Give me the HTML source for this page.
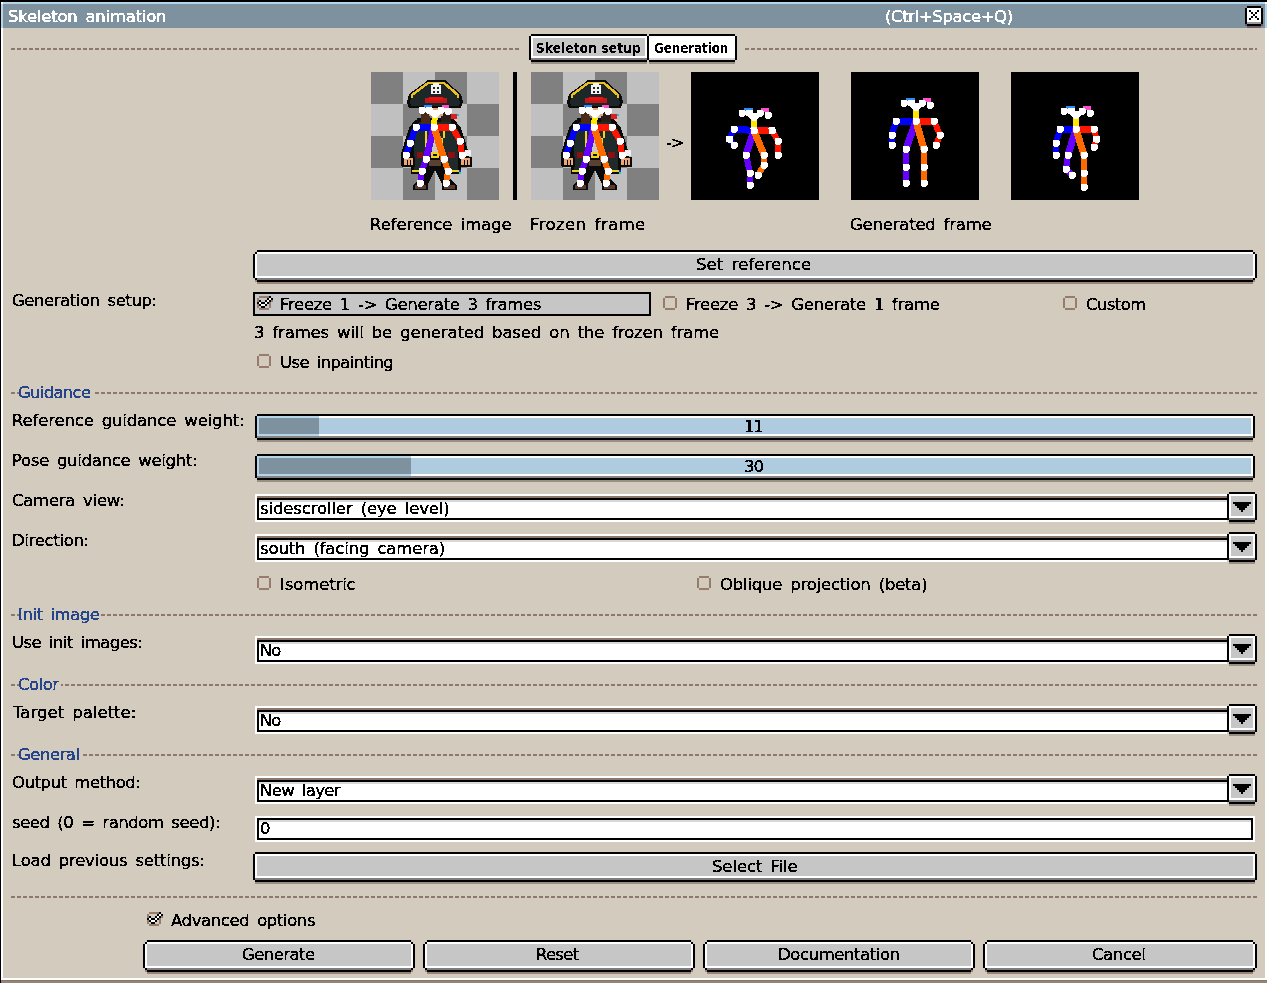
<!DOCTYPE html>
<html lang="en"><head><meta charset="utf-8"><title>Skeleton animation</title>
<style>
html,body{margin:0;padding:0}
body{width:1267px;height:983px;overflow:hidden;background:#d3cbbe;position:relative;font-family:"DejaVu Sans","Liberation Sans",sans-serif}
i{position:absolute;display:block}
i.d{height:2px;background:repeating-linear-gradient(90deg,#8d786b 0,#8d786b 4px,transparent 4px,transparent 6px)}
.t,.m{will-change:transform;filter:url(#px)}
.t{position:absolute;white-space:pre;font-size:16.5px;line-height:20px;color:#000;word-spacing:3px;-webkit-text-stroke:0.3px currentColor}
.t.w{color:#fff}
.t.b{color:#27468c}
.m{position:absolute;white-space:pre;font-family:"DejaVu Sans Condensed","DejaVu Sans","Liberation Sans",sans-serif;font-size:13.5px;line-height:20px;font-weight:bold;color:#000}
svg{position:absolute;display:block}
</style></head>
<body>
<svg width="0" height="0" style="left:0;top:0"><defs><filter id="px" x="0" y="0" width="1" height="1" color-interpolation-filters="sRGB"><feComponentTransfer><feFuncA type="discrete" tableValues="0 1"/></feComponentTransfer></filter></defs></svg>
<i style="left:0px;top:0px;width:1267px;height:2px;background:#000"></i>
<i style="left:0px;top:0px;width:1px;height:983px;background:#000"></i>
<i style="left:1px;top:2px;width:1266px;height:2px;background:#b5d5ea"></i>
<i style="left:1px;top:2px;width:2px;height:2px;background:#fff"></i>
<i style="left:1265px;top:2px;width:2px;height:2px;background:#fff"></i>
<i style="left:1px;top:4px;width:2px;height:24px;background:#b5d5ea"></i>
<i style="left:1265px;top:4px;width:2px;height:24px;background:#b5d5ea"></i>
<i style="left:3px;top:4px;width:1262px;height:24px;background:#7d929e"></i>
<i style="left:1px;top:28px;width:2px;height:952px;background:#fff"></i>
<i style="left:1265px;top:28px;width:2px;height:952px;background:#fff"></i>
<i style="left:1px;top:978px;width:1266px;height:2px;background:#fff"></i>
<i style="left:1px;top:980px;width:1266px;height:1px;background:#8c7668"></i>
<i style="left:1px;top:981px;width:1266px;height:2px;background:#958373"></i>
<i style="left:1247px;top:6px;width:14px;height:2px;background:#000"></i>
<i style="left:1245px;top:8px;width:2px;height:16px;background:#000"></i>
<i style="left:1261px;top:8px;width:2px;height:16px;background:#000"></i>
<i style="left:1247px;top:24px;width:14px;height:2px;background:#000"></i>
<i style="left:1247px;top:8px;width:14px;height:14px;background:#fff"></i>
<i style="left:1247px;top:22px;width:14px;height:2px;background:#9a9a9a"></i>
<i style="left:1247px;top:26px;width:14px;height:2px;background:#6d5b6c"></i>
<i style="left:1245px;top:24px;width:2px;height:2px;background:#6d5b6c"></i>
<i style="left:1261px;top:24px;width:2px;height:2px;background:#6d5b6c"></i>
<i style="left:1249px;top:10px;width:2px;height:2px;background:#000"></i>
<i style="left:1257px;top:10px;width:2px;height:2px;background:#000"></i>
<i style="left:1251px;top:12px;width:2px;height:2px;background:#000"></i>
<i style="left:1255px;top:12px;width:2px;height:2px;background:#000"></i>
<i style="left:1253px;top:14px;width:2px;height:2px;background:#000"></i>
<i style="left:1251px;top:16px;width:2px;height:2px;background:#000"></i>
<i style="left:1255px;top:16px;width:2px;height:2px;background:#000"></i>
<i style="left:1249px;top:18px;width:2px;height:2px;background:#000"></i>
<i style="left:1257px;top:18px;width:2px;height:2px;background:#000"></i>
<i class="d" style="left:11px;top:48px;width:508px"></i>
<i class="d" style="left:745px;top:48px;width:512px"></i>
<i style="left:531px;top:36px;width:116px;height:24px;background:#fff"></i>
<i style="left:531px;top:34px;width:116px;height:2px;background:#000"></i>
<i style="left:531px;top:60px;width:116px;height:2px;background:#000"></i>
<i style="left:529px;top:36px;width:2px;height:24px;background:#000"></i>
<i style="left:647px;top:36px;width:2px;height:24px;background:#000"></i>
<i style="left:533px;top:38px;width:112px;height:18px;background:#c6c6c6"></i>
<i style="left:531px;top:58px;width:116px;height:2px;background:#7f7f7f"></i>
<i style="left:531px;top:62px;width:116px;height:2px;background:#9a8f84"></i>
<i style="left:649px;top:36px;width:86px;height:24px;background:#fff"></i>
<i style="left:649px;top:34px;width:86px;height:2px;background:#000"></i>
<i style="left:649px;top:60px;width:86px;height:2px;background:#000"></i>
<i style="left:647px;top:36px;width:2px;height:24px;background:#000"></i>
<i style="left:735px;top:36px;width:2px;height:24px;background:#000"></i>
<i style="left:651px;top:38px;width:82px;height:18px;background:#fff"></i>
<i style="left:649px;top:58px;width:86px;height:2px;background:#d4d4d4"></i>
<i style="left:649px;top:62px;width:86px;height:2px;background:#9a8f84"></i>
<svg style="left:371px;top:72px" width="128" height="128" viewBox="0 0 128 128" shape-rendering="crispEdges"><rect width="128" height="128" fill="#c0c0c0"/><rect x="0" y="0" width="32" height="32" fill="#808080"/><rect x="64" y="0" width="32" height="32" fill="#808080"/><rect x="32" y="32" width="32" height="32" fill="#808080"/><rect x="96" y="32" width="32" height="32" fill="#808080"/><rect x="0" y="64" width="32" height="32" fill="#808080"/><rect x="64" y="64" width="32" height="32" fill="#808080"/><rect x="32" y="96" width="32" height="32" fill="#808080"/><rect x="96" y="96" width="32" height="32" fill="#808080"/><polygon points="56,88 72,88 80,108 86,113 86,118 71,118 71,112 64,98 57,112 57,118 42,118 42,113 48,108" fill="#0a0a0a"/><rect x="44" y="113" width="11" height="4" fill="#5a3a28"/><rect x="73" y="113" width="11" height="4" fill="#5a3a28"/><rect x="58" y="88" width="12" height="6" fill="#5a4030"/><polygon points="45,47 38,56 33,72 30,82 30,94 43,95 44,84 46,70 48,58" fill="#0a0a0a"/><polygon points="83,47 90,56 95,72 98,82 99,94 86,95 84,84 82,70 80,58" fill="#0a0a0a"/><polygon points="44,52 40,60 36,72 34,80 42,80 44,70 46,60" fill="#1f2b2b"/><polygon points="84,52 88,60 92,72 94,80 86,80 84,70 82,60" fill="#1f2b2b"/><polygon points="46,46 82,46 87,60 89,80 90,102 76,102 70,88 58,88 52,102 40,102 40,80 42,60" fill="#0a0a0a"/><polygon points="48,50 80,50 85,62 87,80 87,98 77,98 71,85 57,85 51,98 43,98 43,80 44,62" fill="#1f2b2b"/><rect x="50" y="40" width="9" height="12" fill="#4a2a1a"/><rect x="70" y="40" width="10" height="10" fill="#2a1c18"/><rect x="58" y="32" width="14" height="12" fill="#e8a87c"/><rect x="61" y="62" width="6" height="18" fill="#c8c8c0"/><rect x="54" y="58" width="2" height="22" fill="#f0d020"/><rect x="72" y="58" width="2" height="8" fill="#f0d020"/><rect x="70" y="66" width="2" height="12" fill="#f0d020"/><rect x="46" y="80" width="6" height="6" fill="#8a1018"/><rect x="77" y="80" width="7" height="6" fill="#8a1018"/><rect x="56" y="80" width="16" height="6" fill="#101010"/><rect x="60" y="80" width="8" height="6" fill="#f0d020"/><rect x="62" y="82" width="4" height="2" fill="#101010"/><rect x="41" y="98" width="8" height="2" fill="#f0d020"/><rect x="79" y="98" width="10" height="2" fill="#f0d020"/><rect x="88" y="98" width="2" height="2" fill="#2030e0"/><rect x="88" y="100" width="2" height="2" fill="#20d0c0"/><rect x="31" y="85" width="13" height="10" fill="#0a0a0a"/><rect x="33" y="86" width="9" height="7" fill="#e8a87c"/><rect x="36" y="88" width="1" height="5" fill="#0a0a0a"/><rect x="39" y="88" width="1" height="5" fill="#0a0a0a"/><rect x="88" y="85" width="13" height="10" fill="#0a0a0a"/><rect x="90" y="86" width="9" height="7" fill="#e8a87c"/><rect x="93" y="88" width="1" height="5" fill="#0a0a0a"/><rect x="96" y="88" width="1" height="5" fill="#0a0a0a"/><rect x="94" y="78" width="6" height="6" fill="#f0f0f0"/><rect x="80" y="42" width="6" height="5" fill="#e02020"/><rect x="86" y="42" width="2" height="2" fill="#20c0e0"/><rect x="84" y="47" width="3" height="2" fill="#f0c0c0"/><polygon points="56,8 74,8 78,12 90,22 92,30 90,36 38,36 36,30 38,22 52,12" fill="#0a0a0a"/><polygon points="57,12 73,12 87,24 89,30 88,34 40,34 39,30 41,24" fill="#1e2727"/><polyline points="41,26 41,23 57,11 73,11 87,23 87,26" fill="none" stroke="#e8c020" stroke-width="2.5"/><rect x="54" y="26" width="22" height="5" fill="#c01818"/><rect x="58" y="25" width="14" height="3" fill="#f01010"/><rect x="60" y="13" width="10" height="9" fill="#f4f4f4"/><rect x="62" y="15" width="2" height="2" fill="#222"/><rect x="66" y="15" width="2" height="2" fill="#222"/><rect x="62" y="19" width="2" height="2" fill="#222"/><rect x="66" y="19" width="2" height="2" fill="#222"/><rect x="62" y="11" width="6" height="2" fill="#f4f4f4"/><line x1="64" y1="42" x2="63" y2="55" stroke="#ffe600" stroke-width="6" stroke-linecap="butt"/><line x1="63" y1="55" x2="45" y2="55" stroke="#0000ff" stroke-width="7" stroke-linecap="butt"/><line x1="45" y1="55" x2="39" y2="71" stroke="#0000ff" stroke-width="6" stroke-linecap="butt"/><line x1="39" y1="71" x2="35" y2="83" stroke="#0000ff" stroke-width="6" stroke-linecap="butt"/><line x1="63" y1="55" x2="81" y2="55" stroke="#ff1500" stroke-width="7" stroke-linecap="butt"/><line x1="81" y1="55" x2="89" y2="69" stroke="#ff1500" stroke-width="6" stroke-linecap="butt"/><line x1="89" y1="69" x2="91" y2="83" stroke="#ff1500" stroke-width="6" stroke-linecap="butt"/><line x1="63" y1="55" x2="55" y2="87" stroke="#6600ff" stroke-width="7" stroke-linecap="butt"/><line x1="55" y1="87" x2="51" y2="99" stroke="#6600ff" stroke-width="6" stroke-linecap="butt"/><line x1="51" y1="99" x2="49" y2="111" stroke="#6600ff" stroke-width="6" stroke-linecap="butt"/><line x1="63" y1="55" x2="73" y2="87" stroke="#ff6a00" stroke-width="7" stroke-linecap="butt"/><line x1="73" y1="87" x2="77" y2="99" stroke="#ff6a00" stroke-width="6" stroke-linecap="butt"/><line x1="77" y1="99" x2="75" y2="111" stroke="#ff6a00" stroke-width="6" stroke-linecap="butt"/><rect x="53" y="33" width="8" height="3" fill="#2a8cff"/><rect x="71" y="33" width="7" height="4" fill="#ff4fd0"/><rect x="47.5" y="34.5" width="7" height="7" rx="1.5" fill="#fff"/><rect x="54.5" y="34.5" width="7" height="7" rx="1.5" fill="#fff"/><rect x="66.5" y="34.5" width="7" height="7" rx="1.5" fill="#fff"/><rect x="73.5" y="35.5" width="7" height="7" rx="1.5" fill="#fff"/><polygon points="55,38 73,38 67,45 61,45" fill="#fff"/><rect x="60.5" y="38.5" width="7" height="7" rx="1.5" fill="#fff"/><rect x="59.5" y="51.5" width="7" height="7" rx="1.5" fill="#fff"/><rect x="41.5" y="51.5" width="7" height="7" rx="1.5" fill="#fff"/><rect x="35.5" y="67.5" width="7" height="7" rx="1.5" fill="#fff"/><rect x="31.5" y="79.5" width="7" height="7" rx="1.5" fill="#fff"/><rect x="77.5" y="51.5" width="7" height="7" rx="1.5" fill="#fff"/><rect x="85.5" y="65.5" width="7" height="7" rx="1.5" fill="#fff"/><rect x="87.5" y="79.5" width="7" height="7" rx="1.5" fill="#fff"/><rect x="51.5" y="83.5" width="7" height="7" rx="1.5" fill="#fff"/><rect x="47.5" y="95.5" width="7" height="7" rx="1.5" fill="#fff"/><rect x="45.5" y="107.5" width="7" height="7" rx="1.5" fill="#fff"/><rect x="69.5" y="83.5" width="7" height="7" rx="1.5" fill="#fff"/><rect x="73.5" y="95.5" width="7" height="7" rx="1.5" fill="#fff"/><rect x="71.5" y="107.5" width="7" height="7" rx="1.5" fill="#fff"/></svg><svg style="left:531px;top:72px" width="128" height="128" viewBox="0 0 128 128" shape-rendering="crispEdges"><rect width="128" height="128" fill="#c0c0c0"/><rect x="0" y="0" width="32" height="32" fill="#808080"/><rect x="64" y="0" width="32" height="32" fill="#808080"/><rect x="32" y="32" width="32" height="32" fill="#808080"/><rect x="96" y="32" width="32" height="32" fill="#808080"/><rect x="0" y="64" width="32" height="32" fill="#808080"/><rect x="64" y="64" width="32" height="32" fill="#808080"/><rect x="32" y="96" width="32" height="32" fill="#808080"/><rect x="96" y="96" width="32" height="32" fill="#808080"/><polygon points="56,88 72,88 80,108 86,113 86,118 71,118 71,112 64,98 57,112 57,118 42,118 42,113 48,108" fill="#0a0a0a"/><rect x="44" y="113" width="11" height="4" fill="#5a3a28"/><rect x="73" y="113" width="11" height="4" fill="#5a3a28"/><rect x="58" y="88" width="12" height="6" fill="#5a4030"/><polygon points="45,47 38,56 33,72 30,82 30,94 43,95 44,84 46,70 48,58" fill="#0a0a0a"/><polygon points="83,47 90,56 95,72 98,82 99,94 86,95 84,84 82,70 80,58" fill="#0a0a0a"/><polygon points="44,52 40,60 36,72 34,80 42,80 44,70 46,60" fill="#1f2b2b"/><polygon points="84,52 88,60 92,72 94,80 86,80 84,70 82,60" fill="#1f2b2b"/><polygon points="46,46 82,46 87,60 89,80 90,102 76,102 70,88 58,88 52,102 40,102 40,80 42,60" fill="#0a0a0a"/><polygon points="48,50 80,50 85,62 87,80 87,98 77,98 71,85 57,85 51,98 43,98 43,80 44,62" fill="#1f2b2b"/><rect x="50" y="40" width="9" height="12" fill="#4a2a1a"/><rect x="70" y="40" width="10" height="10" fill="#2a1c18"/><rect x="58" y="32" width="14" height="12" fill="#e8a87c"/><rect x="61" y="62" width="6" height="18" fill="#c8c8c0"/><rect x="54" y="58" width="2" height="22" fill="#f0d020"/><rect x="72" y="58" width="2" height="8" fill="#f0d020"/><rect x="70" y="66" width="2" height="12" fill="#f0d020"/><rect x="46" y="80" width="6" height="6" fill="#8a1018"/><rect x="77" y="80" width="7" height="6" fill="#8a1018"/><rect x="56" y="80" width="16" height="6" fill="#101010"/><rect x="60" y="80" width="8" height="6" fill="#f0d020"/><rect x="62" y="82" width="4" height="2" fill="#101010"/><rect x="41" y="98" width="8" height="2" fill="#f0d020"/><rect x="79" y="98" width="10" height="2" fill="#f0d020"/><rect x="88" y="98" width="2" height="2" fill="#2030e0"/><rect x="88" y="100" width="2" height="2" fill="#20d0c0"/><rect x="31" y="85" width="13" height="10" fill="#0a0a0a"/><rect x="33" y="86" width="9" height="7" fill="#e8a87c"/><rect x="36" y="88" width="1" height="5" fill="#0a0a0a"/><rect x="39" y="88" width="1" height="5" fill="#0a0a0a"/><rect x="88" y="85" width="13" height="10" fill="#0a0a0a"/><rect x="90" y="86" width="9" height="7" fill="#e8a87c"/><rect x="93" y="88" width="1" height="5" fill="#0a0a0a"/><rect x="96" y="88" width="1" height="5" fill="#0a0a0a"/><rect x="94" y="78" width="6" height="6" fill="#f0f0f0"/><rect x="80" y="42" width="6" height="5" fill="#e02020"/><rect x="86" y="42" width="2" height="2" fill="#20c0e0"/><rect x="84" y="47" width="3" height="2" fill="#f0c0c0"/><polygon points="56,8 74,8 78,12 90,22 92,30 90,36 38,36 36,30 38,22 52,12" fill="#0a0a0a"/><polygon points="57,12 73,12 87,24 89,30 88,34 40,34 39,30 41,24" fill="#1e2727"/><polyline points="41,26 41,23 57,11 73,11 87,23 87,26" fill="none" stroke="#e8c020" stroke-width="2.5"/><rect x="54" y="26" width="22" height="5" fill="#c01818"/><rect x="58" y="25" width="14" height="3" fill="#f01010"/><rect x="60" y="13" width="10" height="9" fill="#f4f4f4"/><rect x="62" y="15" width="2" height="2" fill="#222"/><rect x="66" y="15" width="2" height="2" fill="#222"/><rect x="62" y="19" width="2" height="2" fill="#222"/><rect x="66" y="19" width="2" height="2" fill="#222"/><rect x="62" y="11" width="6" height="2" fill="#f4f4f4"/><line x1="64" y1="42" x2="63" y2="55" stroke="#ffe600" stroke-width="6" stroke-linecap="butt"/><line x1="63" y1="55" x2="45" y2="55" stroke="#0000ff" stroke-width="7" stroke-linecap="butt"/><line x1="45" y1="55" x2="39" y2="71" stroke="#0000ff" stroke-width="6" stroke-linecap="butt"/><line x1="39" y1="71" x2="35" y2="83" stroke="#0000ff" stroke-width="6" stroke-linecap="butt"/><line x1="63" y1="55" x2="81" y2="55" stroke="#ff1500" stroke-width="7" stroke-linecap="butt"/><line x1="81" y1="55" x2="89" y2="69" stroke="#ff1500" stroke-width="6" stroke-linecap="butt"/><line x1="89" y1="69" x2="91" y2="83" stroke="#ff1500" stroke-width="6" stroke-linecap="butt"/><line x1="63" y1="55" x2="55" y2="87" stroke="#6600ff" stroke-width="7" stroke-linecap="butt"/><line x1="55" y1="87" x2="51" y2="99" stroke="#6600ff" stroke-width="6" stroke-linecap="butt"/><line x1="51" y1="99" x2="49" y2="111" stroke="#6600ff" stroke-width="6" stroke-linecap="butt"/><line x1="63" y1="55" x2="73" y2="87" stroke="#ff6a00" stroke-width="7" stroke-linecap="butt"/><line x1="73" y1="87" x2="77" y2="99" stroke="#ff6a00" stroke-width="6" stroke-linecap="butt"/><line x1="77" y1="99" x2="75" y2="111" stroke="#ff6a00" stroke-width="6" stroke-linecap="butt"/><rect x="53" y="33" width="8" height="3" fill="#2a8cff"/><rect x="71" y="33" width="7" height="4" fill="#ff4fd0"/><rect x="47.5" y="34.5" width="7" height="7" rx="1.5" fill="#fff"/><rect x="54.5" y="34.5" width="7" height="7" rx="1.5" fill="#fff"/><rect x="66.5" y="34.5" width="7" height="7" rx="1.5" fill="#fff"/><rect x="73.5" y="35.5" width="7" height="7" rx="1.5" fill="#fff"/><polygon points="55,38 73,38 67,45 61,45" fill="#fff"/><rect x="60.5" y="38.5" width="7" height="7" rx="1.5" fill="#fff"/><rect x="59.5" y="51.5" width="7" height="7" rx="1.5" fill="#fff"/><rect x="41.5" y="51.5" width="7" height="7" rx="1.5" fill="#fff"/><rect x="35.5" y="67.5" width="7" height="7" rx="1.5" fill="#fff"/><rect x="31.5" y="79.5" width="7" height="7" rx="1.5" fill="#fff"/><rect x="77.5" y="51.5" width="7" height="7" rx="1.5" fill="#fff"/><rect x="85.5" y="65.5" width="7" height="7" rx="1.5" fill="#fff"/><rect x="87.5" y="79.5" width="7" height="7" rx="1.5" fill="#fff"/><rect x="51.5" y="83.5" width="7" height="7" rx="1.5" fill="#fff"/><rect x="47.5" y="95.5" width="7" height="7" rx="1.5" fill="#fff"/><rect x="45.5" y="107.5" width="7" height="7" rx="1.5" fill="#fff"/><rect x="69.5" y="83.5" width="7" height="7" rx="1.5" fill="#fff"/><rect x="73.5" y="95.5" width="7" height="7" rx="1.5" fill="#fff"/><rect x="71.5" y="107.5" width="7" height="7" rx="1.5" fill="#fff"/></svg><svg style="left:691px;top:72px" width="128" height="128" viewBox="0 0 128 128" shape-rendering="crispEdges"><rect width="128" height="128" fill="#000"/><line x1="63" y1="45" x2="63" y2="58.5" stroke="#ffe600" stroke-width="6" stroke-linecap="butt"/><line x1="63" y1="58.5" x2="43" y2="57" stroke="#0000ff" stroke-width="7" stroke-linecap="butt"/><line x1="43" y1="57" x2="38.5" y2="67" stroke="#0000ff" stroke-width="6" stroke-linecap="butt"/><line x1="38.5" y1="67" x2="43" y2="73" stroke="#0000ff" stroke-width="6" stroke-linecap="butt"/><line x1="63" y1="58.5" x2="81" y2="58.5" stroke="#ff1500" stroke-width="7" stroke-linecap="butt"/><line x1="81" y1="58.5" x2="87" y2="69" stroke="#ff1500" stroke-width="6" stroke-linecap="butt"/><line x1="87" y1="69" x2="87" y2="83" stroke="#ff1500" stroke-width="6" stroke-linecap="butt"/><line x1="63" y1="58.5" x2="55" y2="83" stroke="#6600ff" stroke-width="7" stroke-linecap="butt"/><line x1="55" y1="83" x2="59" y2="101" stroke="#6600ff" stroke-width="6" stroke-linecap="butt"/><line x1="59" y1="101" x2="59" y2="113" stroke="#6600ff" stroke-width="6" stroke-linecap="butt"/><line x1="63" y1="58.5" x2="73" y2="83" stroke="#ff6a00" stroke-width="7" stroke-linecap="butt"/><line x1="73" y1="83" x2="73" y2="93" stroke="#ff6a00" stroke-width="6" stroke-linecap="butt"/><line x1="73" y1="93" x2="67" y2="103" stroke="#ff6a00" stroke-width="6" stroke-linecap="butt"/><rect x="53" y="36" width="8.5" height="3" fill="#2a8cff"/><rect x="70" y="36" width="8" height="4" fill="#ff4fd0"/><rect x="47.5" y="37.5" width="7" height="7" rx="1.5" fill="#fff"/><rect x="55.0" y="37.5" width="7" height="7" rx="1.5" fill="#fff"/><rect x="65.5" y="37.5" width="7" height="7" rx="1.5" fill="#fff"/><rect x="73.5" y="39.5" width="7" height="7" rx="1.5" fill="#fff"/><polygon points="55.5,41 72,41 66,48 60,48" fill="#fff"/><rect x="59.5" y="41.5" width="7" height="7" rx="1.5" fill="#fff"/><rect x="59.5" y="55.0" width="7" height="7" rx="1.5" fill="#fff"/><rect x="39.5" y="53.5" width="7" height="7" rx="1.5" fill="#fff"/><rect x="35.0" y="63.5" width="7" height="7" rx="1.5" fill="#fff"/><rect x="39.5" y="69.5" width="7" height="7" rx="1.5" fill="#fff"/><rect x="77.5" y="55.0" width="7" height="7" rx="1.5" fill="#fff"/><rect x="83.5" y="65.5" width="7" height="7" rx="1.5" fill="#fff"/><rect x="83.5" y="79.5" width="7" height="7" rx="1.5" fill="#fff"/><rect x="51.5" y="79.5" width="7" height="7" rx="1.5" fill="#fff"/><rect x="55.5" y="97.5" width="7" height="7" rx="1.5" fill="#fff"/><rect x="55.5" y="109.5" width="7" height="7" rx="1.5" fill="#fff"/><rect x="69.5" y="79.5" width="7" height="7" rx="1.5" fill="#fff"/><rect x="69.5" y="89.5" width="7" height="7" rx="1.5" fill="#fff"/><rect x="63.5" y="99.5" width="7" height="7" rx="1.5" fill="#fff"/></svg><svg style="left:851px;top:72px" width="128" height="128" viewBox="0 0 128 128" shape-rendering="crispEdges"><rect width="128" height="128" fill="#000"/><line x1="65" y1="35" x2="65" y2="49" stroke="#ffe600" stroke-width="6" stroke-linecap="butt"/><line x1="65" y1="49" x2="45" y2="49" stroke="#0000ff" stroke-width="7" stroke-linecap="butt"/><line x1="45" y1="49" x2="41" y2="63" stroke="#0000ff" stroke-width="6" stroke-linecap="butt"/><line x1="41" y1="63" x2="41" y2="73" stroke="#0000ff" stroke-width="6" stroke-linecap="butt"/><line x1="65" y1="49" x2="83" y2="49" stroke="#ff1500" stroke-width="7" stroke-linecap="butt"/><line x1="83" y1="49" x2="89" y2="63" stroke="#ff1500" stroke-width="6" stroke-linecap="butt"/><line x1="89" y1="63" x2="85" y2="73" stroke="#ff1500" stroke-width="6" stroke-linecap="butt"/><line x1="65" y1="49" x2="55" y2="77" stroke="#6600ff" stroke-width="7" stroke-linecap="butt"/><line x1="55" y1="77" x2="55" y2="95" stroke="#6600ff" stroke-width="6" stroke-linecap="butt"/><line x1="55" y1="95" x2="55" y2="111" stroke="#6600ff" stroke-width="6" stroke-linecap="butt"/><line x1="65" y1="49" x2="73" y2="77" stroke="#ff6a00" stroke-width="7" stroke-linecap="butt"/><line x1="73" y1="77" x2="73" y2="95" stroke="#ff6a00" stroke-width="6" stroke-linecap="butt"/><line x1="73" y1="95" x2="73" y2="111" stroke="#ff6a00" stroke-width="6" stroke-linecap="butt"/><rect x="55" y="26" width="8.5" height="3" fill="#2a8cff"/><rect x="72" y="26" width="8" height="4" fill="#ff4fd0"/><rect x="49.5" y="27.5" width="7" height="7" rx="1.5" fill="#fff"/><rect x="57.0" y="27.5" width="7" height="7" rx="1.5" fill="#fff"/><rect x="67.5" y="27.5" width="7" height="7" rx="1.5" fill="#fff"/><rect x="75.5" y="29.5" width="7" height="7" rx="1.5" fill="#fff"/><polygon points="57.5,31 74,31 68,38 62,38" fill="#fff"/><rect x="61.5" y="31.5" width="7" height="7" rx="1.5" fill="#fff"/><rect x="61.5" y="45.5" width="7" height="7" rx="1.5" fill="#fff"/><rect x="41.5" y="45.5" width="7" height="7" rx="1.5" fill="#fff"/><rect x="37.5" y="59.5" width="7" height="7" rx="1.5" fill="#fff"/><rect x="37.5" y="69.5" width="7" height="7" rx="1.5" fill="#fff"/><rect x="79.5" y="45.5" width="7" height="7" rx="1.5" fill="#fff"/><rect x="85.5" y="59.5" width="7" height="7" rx="1.5" fill="#fff"/><rect x="81.5" y="69.5" width="7" height="7" rx="1.5" fill="#fff"/><rect x="51.5" y="73.5" width="7" height="7" rx="1.5" fill="#fff"/><rect x="51.5" y="91.5" width="7" height="7" rx="1.5" fill="#fff"/><rect x="51.5" y="107.5" width="7" height="7" rx="1.5" fill="#fff"/><rect x="69.5" y="73.5" width="7" height="7" rx="1.5" fill="#fff"/><rect x="69.5" y="91.5" width="7" height="7" rx="1.5" fill="#fff"/><rect x="69.5" y="107.5" width="7" height="7" rx="1.5" fill="#fff"/></svg><svg style="left:1011px;top:72px" width="128" height="128" viewBox="0 0 128 128" shape-rendering="crispEdges"><rect width="128" height="128" fill="#000"/><line x1="65" y1="43" x2="65" y2="57" stroke="#ffe600" stroke-width="6" stroke-linecap="butt"/><line x1="65" y1="57" x2="49" y2="57" stroke="#0000ff" stroke-width="7" stroke-linecap="butt"/><line x1="49" y1="57" x2="45" y2="71" stroke="#0000ff" stroke-width="6" stroke-linecap="butt"/><line x1="45" y1="71" x2="45" y2="83" stroke="#0000ff" stroke-width="6" stroke-linecap="butt"/><line x1="65" y1="57" x2="83" y2="57" stroke="#ff1500" stroke-width="7" stroke-linecap="butt"/><line x1="83" y1="57" x2="85.5" y2="67" stroke="#ff1500" stroke-width="6" stroke-linecap="butt"/><line x1="85.5" y1="67" x2="83" y2="75" stroke="#ff1500" stroke-width="6" stroke-linecap="butt"/><line x1="65" y1="57" x2="57" y2="83" stroke="#6600ff" stroke-width="7" stroke-linecap="butt"/><line x1="57" y1="83" x2="55" y2="97" stroke="#6600ff" stroke-width="6" stroke-linecap="butt"/><line x1="55" y1="97" x2="61" y2="103" stroke="#6600ff" stroke-width="6" stroke-linecap="butt"/><line x1="65" y1="57" x2="73" y2="83" stroke="#ff6a00" stroke-width="7" stroke-linecap="butt"/><line x1="73" y1="83" x2="73" y2="101" stroke="#ff6a00" stroke-width="6" stroke-linecap="butt"/><line x1="73" y1="101" x2="73" y2="115" stroke="#ff6a00" stroke-width="6" stroke-linecap="butt"/><rect x="55" y="34" width="8.5" height="3" fill="#2a8cff"/><rect x="72" y="34" width="8" height="4" fill="#ff4fd0"/><rect x="49.5" y="35.5" width="7" height="7" rx="1.5" fill="#fff"/><rect x="57.0" y="35.5" width="7" height="7" rx="1.5" fill="#fff"/><rect x="67.5" y="35.5" width="7" height="7" rx="1.5" fill="#fff"/><rect x="75.5" y="37.5" width="7" height="7" rx="1.5" fill="#fff"/><polygon points="57.5,39 74,39 68,46 62,46" fill="#fff"/><rect x="61.5" y="39.5" width="7" height="7" rx="1.5" fill="#fff"/><rect x="61.5" y="53.5" width="7" height="7" rx="1.5" fill="#fff"/><rect x="45.5" y="53.5" width="7" height="7" rx="1.5" fill="#fff"/><rect x="41.5" y="67.5" width="7" height="7" rx="1.5" fill="#fff"/><rect x="41.5" y="79.5" width="7" height="7" rx="1.5" fill="#fff"/><rect x="79.5" y="53.5" width="7" height="7" rx="1.5" fill="#fff"/><rect x="82.0" y="63.5" width="7" height="7" rx="1.5" fill="#fff"/><rect x="79.5" y="71.5" width="7" height="7" rx="1.5" fill="#fff"/><rect x="53.5" y="79.5" width="7" height="7" rx="1.5" fill="#fff"/><rect x="51.5" y="93.5" width="7" height="7" rx="1.5" fill="#fff"/><rect x="57.5" y="99.5" width="7" height="7" rx="1.5" fill="#fff"/><rect x="69.5" y="79.5" width="7" height="7" rx="1.5" fill="#fff"/><rect x="69.5" y="97.5" width="7" height="7" rx="1.5" fill="#fff"/><rect x="69.5" y="111.5" width="7" height="7" rx="1.5" fill="#fff"/></svg>
<i style="left:513px;top:72px;width:4px;height:128px;background:#000"></i>
<i style="left:255px;top:254px;width:1000px;height:24px;background:#fff"></i>
<i style="left:257px;top:252px;width:996px;height:28px;background:#fff"></i>
<i style="left:257px;top:250px;width:996px;height:2px;background:#000"></i>
<i style="left:257px;top:280px;width:996px;height:2px;background:#000"></i>
<i style="left:253px;top:254px;width:2px;height:24px;background:#000"></i>
<i style="left:1255px;top:254px;width:2px;height:24px;background:#000"></i>
<i style="left:255px;top:252px;width:2px;height:2px;background:#000"></i>
<i style="left:1253px;top:252px;width:2px;height:2px;background:#000"></i>
<i style="left:255px;top:278px;width:2px;height:2px;background:#000"></i>
<i style="left:1253px;top:278px;width:2px;height:2px;background:#000"></i>
<i style="left:257px;top:254px;width:996px;height:22px;background:#c6c6c6"></i>
<i style="left:257px;top:278px;width:996px;height:2px;background:#7f7f7f"></i>
<i style="left:257px;top:282px;width:996px;height:2px;background:#998475"></i>
<i style="left:255px;top:280px;width:2px;height:2px;background:#998475"></i>
<i style="left:1253px;top:280px;width:2px;height:2px;background:#998475"></i>
<i style="left:253px;top:292px;width:398px;height:24px;background:#000"></i>
<i style="left:255px;top:294px;width:394px;height:20px;background:#c6c6c6"></i>
<i style="left:259px;top:296px;width:10px;height:2px;background:#957c6b"></i>
<i style="left:259px;top:308px;width:10px;height:2px;background:#957c6b"></i>
<i style="left:257px;top:298px;width:2px;height:10px;background:#957c6b"></i>
<i style="left:269px;top:298px;width:2px;height:10px;background:#957c6b"></i>
<i style="left:269px;top:296px;width:2px;height:2px;background:#000"></i>
<i style="left:267px;top:298px;width:2px;height:2px;background:#000"></i>
<i style="left:269px;top:298px;width:2px;height:2px;background:#fff"></i>
<i style="left:271px;top:298px;width:2px;height:2px;background:#000"></i>
<i style="left:259px;top:300px;width:2px;height:2px;background:#000"></i>
<i style="left:265px;top:300px;width:2px;height:2px;background:#000"></i>
<i style="left:267px;top:300px;width:2px;height:2px;background:#fff"></i>
<i style="left:269px;top:300px;width:2px;height:2px;background:#000"></i>
<i style="left:271px;top:300px;width:2px;height:2px;background:#957c6b"></i>
<i style="left:257px;top:302px;width:2px;height:2px;background:#000"></i>
<i style="left:259px;top:302px;width:2px;height:2px;background:#fff"></i>
<i style="left:261px;top:302px;width:4px;height:2px;background:#000"></i>
<i style="left:265px;top:302px;width:2px;height:2px;background:#fff"></i>
<i style="left:267px;top:302px;width:2px;height:2px;background:#000"></i>
<i style="left:259px;top:304px;width:2px;height:2px;background:#000"></i>
<i style="left:261px;top:304px;width:4px;height:2px;background:#fff"></i>
<i style="left:265px;top:304px;width:2px;height:2px;background:#000"></i>
<i style="left:261px;top:306px;width:4px;height:2px;background:#000"></i>
<i style="left:665px;top:296px;width:10px;height:2px;background:#957c6b"></i>
<i style="left:665px;top:308px;width:10px;height:2px;background:#957c6b"></i>
<i style="left:663px;top:298px;width:2px;height:10px;background:#957c6b"></i>
<i style="left:675px;top:298px;width:2px;height:10px;background:#957c6b"></i>
<i style="left:1065px;top:296px;width:10px;height:2px;background:#957c6b"></i>
<i style="left:1065px;top:308px;width:10px;height:2px;background:#957c6b"></i>
<i style="left:1063px;top:298px;width:2px;height:10px;background:#957c6b"></i>
<i style="left:1075px;top:298px;width:2px;height:10px;background:#957c6b"></i>
<i style="left:259px;top:354px;width:10px;height:2px;background:#957c6b"></i>
<i style="left:259px;top:366px;width:10px;height:2px;background:#957c6b"></i>
<i style="left:257px;top:356px;width:2px;height:10px;background:#957c6b"></i>
<i style="left:269px;top:356px;width:2px;height:10px;background:#957c6b"></i>
<i class="d" style="left:11px;top:392px;width:1246px"></i>
<i style="left:257px;top:414px;width:996px;height:2px;background:#000"></i>
<i style="left:255px;top:416px;width:2px;height:22px;background:#000"></i>
<i style="left:1253px;top:416px;width:2px;height:22px;background:#000"></i>
<i style="left:257px;top:438px;width:996px;height:2px;background:#000"></i>
<i style="left:257px;top:416px;width:996px;height:20px;background:#fff"></i>
<i style="left:259px;top:418px;width:992px;height:16px;background:#aecbdf"></i>
<i style="left:257px;top:416px;width:62px;height:20px;background:#b5d5ea"></i>
<i style="left:259px;top:418px;width:60px;height:16px;background:#7d929e"></i>
<i style="left:257px;top:436px;width:996px;height:2px;background:#848484"></i>
<i style="left:257px;top:440px;width:996px;height:2px;background:#9a8f84"></i>
<i style="left:257px;top:454px;width:996px;height:2px;background:#000"></i>
<i style="left:255px;top:456px;width:2px;height:22px;background:#000"></i>
<i style="left:1253px;top:456px;width:2px;height:22px;background:#000"></i>
<i style="left:257px;top:478px;width:996px;height:2px;background:#000"></i>
<i style="left:257px;top:456px;width:996px;height:20px;background:#fff"></i>
<i style="left:259px;top:458px;width:992px;height:16px;background:#aecbdf"></i>
<i style="left:257px;top:456px;width:154px;height:20px;background:#b5d5ea"></i>
<i style="left:259px;top:458px;width:152px;height:16px;background:#7d929e"></i>
<i style="left:257px;top:476px;width:996px;height:2px;background:#848484"></i>
<i style="left:257px;top:480px;width:996px;height:2px;background:#9a8f84"></i>
<i style="left:255px;top:494px;width:972px;height:28px;background:#fff"></i>
<i style="left:257px;top:496px;width:970px;height:2px;background:#8d786b"></i>
<i style="left:257px;top:498px;width:970px;height:22px;background:#000"></i>
<i style="left:259px;top:500px;width:968px;height:2px;background:#d8d8d8"></i>
<i style="left:259px;top:502px;width:968px;height:16px;background:#fff"></i>
<i style="left:1229px;top:494px;width:26px;height:26px;background:#fff"></i>
<i style="left:1229px;top:492px;width:26px;height:2px;background:#000"></i>
<i style="left:1229px;top:520px;width:26px;height:2px;background:#000"></i>
<i style="left:1227px;top:494px;width:2px;height:26px;background:#000"></i>
<i style="left:1255px;top:494px;width:2px;height:26px;background:#000"></i>
<i style="left:1231px;top:496px;width:22px;height:20px;background:#c6c6c6"></i>
<i style="left:1229px;top:518px;width:26px;height:2px;background:#7f7f7f"></i>
<i style="left:1229px;top:522px;width:26px;height:2px;background:#9a8f84"></i>
<i style="left:1233px;top:502px;width:18px;height:2px;background:#000"></i>
<i style="left:1235px;top:504px;width:14px;height:2px;background:#000"></i>
<i style="left:1237px;top:506px;width:10px;height:2px;background:#000"></i>
<i style="left:1239px;top:508px;width:6px;height:2px;background:#000"></i>
<i style="left:1241px;top:510px;width:2px;height:2px;background:#000"></i>
<i style="left:255px;top:534px;width:972px;height:28px;background:#fff"></i>
<i style="left:257px;top:536px;width:970px;height:2px;background:#8d786b"></i>
<i style="left:257px;top:538px;width:970px;height:22px;background:#000"></i>
<i style="left:259px;top:540px;width:968px;height:2px;background:#d8d8d8"></i>
<i style="left:259px;top:542px;width:968px;height:16px;background:#fff"></i>
<i style="left:1229px;top:534px;width:26px;height:26px;background:#fff"></i>
<i style="left:1229px;top:532px;width:26px;height:2px;background:#000"></i>
<i style="left:1229px;top:560px;width:26px;height:2px;background:#000"></i>
<i style="left:1227px;top:534px;width:2px;height:26px;background:#000"></i>
<i style="left:1255px;top:534px;width:2px;height:26px;background:#000"></i>
<i style="left:1231px;top:536px;width:22px;height:20px;background:#c6c6c6"></i>
<i style="left:1229px;top:558px;width:26px;height:2px;background:#7f7f7f"></i>
<i style="left:1229px;top:562px;width:26px;height:2px;background:#9a8f84"></i>
<i style="left:1233px;top:542px;width:18px;height:2px;background:#000"></i>
<i style="left:1235px;top:544px;width:14px;height:2px;background:#000"></i>
<i style="left:1237px;top:546px;width:10px;height:2px;background:#000"></i>
<i style="left:1239px;top:548px;width:6px;height:2px;background:#000"></i>
<i style="left:1241px;top:550px;width:2px;height:2px;background:#000"></i>
<i style="left:259px;top:576px;width:10px;height:2px;background:#957c6b"></i>
<i style="left:259px;top:588px;width:10px;height:2px;background:#957c6b"></i>
<i style="left:257px;top:578px;width:2px;height:10px;background:#957c6b"></i>
<i style="left:269px;top:578px;width:2px;height:10px;background:#957c6b"></i>
<i style="left:699px;top:576px;width:10px;height:2px;background:#957c6b"></i>
<i style="left:699px;top:588px;width:10px;height:2px;background:#957c6b"></i>
<i style="left:697px;top:578px;width:2px;height:10px;background:#957c6b"></i>
<i style="left:709px;top:578px;width:2px;height:10px;background:#957c6b"></i>
<i class="d" style="left:11px;top:614px;width:1246px"></i>
<i style="left:255px;top:636px;width:972px;height:28px;background:#fff"></i>
<i style="left:257px;top:638px;width:970px;height:2px;background:#8d786b"></i>
<i style="left:257px;top:640px;width:970px;height:22px;background:#000"></i>
<i style="left:259px;top:642px;width:968px;height:2px;background:#d8d8d8"></i>
<i style="left:259px;top:644px;width:968px;height:16px;background:#fff"></i>
<i style="left:1229px;top:636px;width:26px;height:26px;background:#fff"></i>
<i style="left:1229px;top:634px;width:26px;height:2px;background:#000"></i>
<i style="left:1229px;top:662px;width:26px;height:2px;background:#000"></i>
<i style="left:1227px;top:636px;width:2px;height:26px;background:#000"></i>
<i style="left:1255px;top:636px;width:2px;height:26px;background:#000"></i>
<i style="left:1231px;top:638px;width:22px;height:20px;background:#c6c6c6"></i>
<i style="left:1229px;top:660px;width:26px;height:2px;background:#7f7f7f"></i>
<i style="left:1229px;top:664px;width:26px;height:2px;background:#9a8f84"></i>
<i style="left:1233px;top:644px;width:18px;height:2px;background:#000"></i>
<i style="left:1235px;top:646px;width:14px;height:2px;background:#000"></i>
<i style="left:1237px;top:648px;width:10px;height:2px;background:#000"></i>
<i style="left:1239px;top:650px;width:6px;height:2px;background:#000"></i>
<i style="left:1241px;top:652px;width:2px;height:2px;background:#000"></i>
<i class="d" style="left:11px;top:684px;width:1246px"></i>
<i style="left:255px;top:706px;width:972px;height:28px;background:#fff"></i>
<i style="left:257px;top:708px;width:970px;height:2px;background:#8d786b"></i>
<i style="left:257px;top:710px;width:970px;height:22px;background:#000"></i>
<i style="left:259px;top:712px;width:968px;height:2px;background:#d8d8d8"></i>
<i style="left:259px;top:714px;width:968px;height:16px;background:#fff"></i>
<i style="left:1229px;top:706px;width:26px;height:26px;background:#fff"></i>
<i style="left:1229px;top:704px;width:26px;height:2px;background:#000"></i>
<i style="left:1229px;top:732px;width:26px;height:2px;background:#000"></i>
<i style="left:1227px;top:706px;width:2px;height:26px;background:#000"></i>
<i style="left:1255px;top:706px;width:2px;height:26px;background:#000"></i>
<i style="left:1231px;top:708px;width:22px;height:20px;background:#c6c6c6"></i>
<i style="left:1229px;top:730px;width:26px;height:2px;background:#7f7f7f"></i>
<i style="left:1229px;top:734px;width:26px;height:2px;background:#9a8f84"></i>
<i style="left:1233px;top:714px;width:18px;height:2px;background:#000"></i>
<i style="left:1235px;top:716px;width:14px;height:2px;background:#000"></i>
<i style="left:1237px;top:718px;width:10px;height:2px;background:#000"></i>
<i style="left:1239px;top:720px;width:6px;height:2px;background:#000"></i>
<i style="left:1241px;top:722px;width:2px;height:2px;background:#000"></i>
<i class="d" style="left:11px;top:754px;width:1246px"></i>
<i style="left:255px;top:776px;width:972px;height:28px;background:#fff"></i>
<i style="left:257px;top:778px;width:970px;height:2px;background:#8d786b"></i>
<i style="left:257px;top:780px;width:970px;height:22px;background:#000"></i>
<i style="left:259px;top:782px;width:968px;height:2px;background:#d8d8d8"></i>
<i style="left:259px;top:784px;width:968px;height:16px;background:#fff"></i>
<i style="left:1229px;top:776px;width:26px;height:26px;background:#fff"></i>
<i style="left:1229px;top:774px;width:26px;height:2px;background:#000"></i>
<i style="left:1229px;top:802px;width:26px;height:2px;background:#000"></i>
<i style="left:1227px;top:776px;width:2px;height:26px;background:#000"></i>
<i style="left:1255px;top:776px;width:2px;height:26px;background:#000"></i>
<i style="left:1231px;top:778px;width:22px;height:20px;background:#c6c6c6"></i>
<i style="left:1229px;top:800px;width:26px;height:2px;background:#7f7f7f"></i>
<i style="left:1229px;top:804px;width:26px;height:2px;background:#9a8f84"></i>
<i style="left:1233px;top:784px;width:18px;height:2px;background:#000"></i>
<i style="left:1235px;top:786px;width:14px;height:2px;background:#000"></i>
<i style="left:1237px;top:788px;width:10px;height:2px;background:#000"></i>
<i style="left:1239px;top:790px;width:6px;height:2px;background:#000"></i>
<i style="left:1241px;top:792px;width:2px;height:2px;background:#000"></i>
<i style="left:255px;top:816px;width:1000px;height:26px;background:#fff"></i>
<i style="left:257px;top:818px;width:996px;height:22px;background:#000"></i>
<i style="left:259px;top:820px;width:992px;height:2px;background:#d8d8d8"></i>
<i style="left:259px;top:822px;width:992px;height:16px;background:#fff"></i>
<i style="left:255px;top:854px;width:1000px;height:26px;background:#fff"></i>
<i style="left:255px;top:852px;width:1000px;height:2px;background:#000"></i>
<i style="left:255px;top:880px;width:1000px;height:2px;background:#000"></i>
<i style="left:253px;top:854px;width:2px;height:26px;background:#000"></i>
<i style="left:1255px;top:854px;width:2px;height:26px;background:#000"></i>
<i style="left:257px;top:856px;width:996px;height:20px;background:#c6c6c6"></i>
<i style="left:255px;top:878px;width:1000px;height:2px;background:#7f7f7f"></i>
<i style="left:255px;top:882px;width:1000px;height:2px;background:#9a8f84"></i>
<i class="d" style="left:11px;top:896px;width:1246px"></i>
<i style="left:149px;top:912px;width:10px;height:2px;background:#957c6b"></i>
<i style="left:149px;top:924px;width:10px;height:2px;background:#957c6b"></i>
<i style="left:147px;top:914px;width:2px;height:10px;background:#957c6b"></i>
<i style="left:159px;top:914px;width:2px;height:10px;background:#957c6b"></i>
<i style="left:159px;top:912px;width:2px;height:2px;background:#000"></i>
<i style="left:157px;top:914px;width:2px;height:2px;background:#000"></i>
<i style="left:159px;top:914px;width:2px;height:2px;background:#fff"></i>
<i style="left:161px;top:914px;width:2px;height:2px;background:#000"></i>
<i style="left:149px;top:916px;width:2px;height:2px;background:#000"></i>
<i style="left:155px;top:916px;width:2px;height:2px;background:#000"></i>
<i style="left:157px;top:916px;width:2px;height:2px;background:#fff"></i>
<i style="left:159px;top:916px;width:2px;height:2px;background:#000"></i>
<i style="left:161px;top:916px;width:2px;height:2px;background:#957c6b"></i>
<i style="left:147px;top:918px;width:2px;height:2px;background:#000"></i>
<i style="left:149px;top:918px;width:2px;height:2px;background:#fff"></i>
<i style="left:151px;top:918px;width:4px;height:2px;background:#000"></i>
<i style="left:155px;top:918px;width:2px;height:2px;background:#fff"></i>
<i style="left:157px;top:918px;width:2px;height:2px;background:#000"></i>
<i style="left:149px;top:920px;width:2px;height:2px;background:#000"></i>
<i style="left:151px;top:920px;width:4px;height:2px;background:#fff"></i>
<i style="left:155px;top:920px;width:2px;height:2px;background:#000"></i>
<i style="left:151px;top:922px;width:4px;height:2px;background:#000"></i>
<i style="left:145px;top:944px;width:268px;height:24px;background:#fff"></i>
<i style="left:147px;top:942px;width:264px;height:28px;background:#fff"></i>
<i style="left:147px;top:940px;width:264px;height:2px;background:#000"></i>
<i style="left:147px;top:970px;width:264px;height:2px;background:#000"></i>
<i style="left:143px;top:944px;width:2px;height:24px;background:#000"></i>
<i style="left:413px;top:944px;width:2px;height:24px;background:#000"></i>
<i style="left:145px;top:942px;width:2px;height:2px;background:#000"></i>
<i style="left:411px;top:942px;width:2px;height:2px;background:#000"></i>
<i style="left:145px;top:968px;width:2px;height:2px;background:#000"></i>
<i style="left:411px;top:968px;width:2px;height:2px;background:#000"></i>
<i style="left:147px;top:944px;width:264px;height:22px;background:#c6c6c6"></i>
<i style="left:147px;top:968px;width:264px;height:2px;background:#7f7f7f"></i>
<i style="left:147px;top:972px;width:264px;height:2px;background:#998475"></i>
<i style="left:145px;top:970px;width:2px;height:2px;background:#998475"></i>
<i style="left:411px;top:970px;width:2px;height:2px;background:#998475"></i>
<i style="left:425px;top:944px;width:268px;height:24px;background:#fff"></i>
<i style="left:427px;top:942px;width:264px;height:28px;background:#fff"></i>
<i style="left:427px;top:940px;width:264px;height:2px;background:#000"></i>
<i style="left:427px;top:970px;width:264px;height:2px;background:#000"></i>
<i style="left:423px;top:944px;width:2px;height:24px;background:#000"></i>
<i style="left:693px;top:944px;width:2px;height:24px;background:#000"></i>
<i style="left:425px;top:942px;width:2px;height:2px;background:#000"></i>
<i style="left:691px;top:942px;width:2px;height:2px;background:#000"></i>
<i style="left:425px;top:968px;width:2px;height:2px;background:#000"></i>
<i style="left:691px;top:968px;width:2px;height:2px;background:#000"></i>
<i style="left:427px;top:944px;width:264px;height:22px;background:#c6c6c6"></i>
<i style="left:427px;top:968px;width:264px;height:2px;background:#7f7f7f"></i>
<i style="left:427px;top:972px;width:264px;height:2px;background:#998475"></i>
<i style="left:425px;top:970px;width:2px;height:2px;background:#998475"></i>
<i style="left:691px;top:970px;width:2px;height:2px;background:#998475"></i>
<i style="left:705px;top:944px;width:268px;height:24px;background:#fff"></i>
<i style="left:707px;top:942px;width:264px;height:28px;background:#fff"></i>
<i style="left:707px;top:940px;width:264px;height:2px;background:#000"></i>
<i style="left:707px;top:970px;width:264px;height:2px;background:#000"></i>
<i style="left:703px;top:944px;width:2px;height:24px;background:#000"></i>
<i style="left:973px;top:944px;width:2px;height:24px;background:#000"></i>
<i style="left:705px;top:942px;width:2px;height:2px;background:#000"></i>
<i style="left:971px;top:942px;width:2px;height:2px;background:#000"></i>
<i style="left:705px;top:968px;width:2px;height:2px;background:#000"></i>
<i style="left:971px;top:968px;width:2px;height:2px;background:#000"></i>
<i style="left:707px;top:944px;width:264px;height:22px;background:#c6c6c6"></i>
<i style="left:707px;top:968px;width:264px;height:2px;background:#7f7f7f"></i>
<i style="left:707px;top:972px;width:264px;height:2px;background:#998475"></i>
<i style="left:705px;top:970px;width:2px;height:2px;background:#998475"></i>
<i style="left:971px;top:970px;width:2px;height:2px;background:#998475"></i>
<i style="left:985px;top:944px;width:270px;height:24px;background:#fff"></i>
<i style="left:987px;top:942px;width:266px;height:28px;background:#fff"></i>
<i style="left:987px;top:940px;width:266px;height:2px;background:#000"></i>
<i style="left:987px;top:970px;width:266px;height:2px;background:#000"></i>
<i style="left:983px;top:944px;width:2px;height:24px;background:#000"></i>
<i style="left:1255px;top:944px;width:2px;height:24px;background:#000"></i>
<i style="left:985px;top:942px;width:2px;height:2px;background:#000"></i>
<i style="left:1253px;top:942px;width:2px;height:2px;background:#000"></i>
<i style="left:985px;top:968px;width:2px;height:2px;background:#000"></i>
<i style="left:1253px;top:968px;width:2px;height:2px;background:#000"></i>
<i style="left:987px;top:944px;width:266px;height:22px;background:#c6c6c6"></i>
<i style="left:987px;top:968px;width:266px;height:2px;background:#7f7f7f"></i>
<i style="left:987px;top:972px;width:266px;height:2px;background:#998475"></i>
<i style="left:985px;top:970px;width:2px;height:2px;background:#998475"></i>
<i style="left:1253px;top:970px;width:2px;height:2px;background:#998475"></i>
<span class="t w" id="t0" style="left:8px;top:7px;letter-spacing:-0.235px">Skeleton animation</span>
<span class="t w" id="t1" style="left:885px;top:7px;letter-spacing:-0.385px">(Ctrl+Space+Q)</span>
<span class="t " id="t2" style="left:666px;top:133px;letter-spacing:-1.200px">-></span>
<span class="t " id="t3" style="left:370px;top:215px;letter-spacing:-0.071px">Reference image</span>
<span class="t " id="t4" style="left:530px;top:215px;letter-spacing:0.364px">Frozen frame</span>
<span class="t " id="t5" style="left:850px;top:215px;letter-spacing:-0.214px">Generated frame</span>
<span class="t " id="t6" style="left:696px;top:255px;letter-spacing:0.083px">Set reference</span>
<span class="t " id="t7" style="left:12px;top:291px;letter-spacing:-0.438px">Generation setup:</span>
<span class="t " id="t8" style="left:280px;top:295px;letter-spacing:-0.321px">Freeze 1 -> Generate 3 frames</span>
<span class="t " id="t9" style="left:686px;top:295px;letter-spacing:-0.296px">Freeze 3 -> Generate 1 frame</span>
<span class="t " id="t10" style="left:1086px;top:295px;letter-spacing:-0.600px">Custom</span>
<span class="t " id="t11" style="left:254px;top:323px;letter-spacing:-0.157px">3 frames will be generated based on the frozen frame</span>
<span class="t " id="t12" style="left:280px;top:353px;letter-spacing:-0.615px">Use inpainting</span>
<i style="left:19px;top:384px;width:74px;height:18px;background:#d3cbbe"></i>
<span class="t b" id="t13" style="left:18px;top:383px;letter-spacing:-0.714px">Guidance</span>
<span class="t " id="t14" style="left:12px;top:411px;letter-spacing:-0.160px">Reference guidance weight:</span>
<span class="t " id="t15" style="left:744px;top:417px;letter-spacing:-1.200px">11</span>
<span class="t " id="t16" style="left:12px;top:451px;letter-spacing:-0.300px">Pose guidance weight:</span>
<span class="t " id="t17" style="left:744px;top:457px;letter-spacing:-1.000px">30</span>
<span class="t " id="t18" style="left:12px;top:491px;letter-spacing:-0.273px">Camera view:</span>
<span class="t " id="t19" style="left:260px;top:499px;letter-spacing:-0.130px">sidescroller (eye level)</span>
<span class="t " id="t20" style="left:12px;top:531px;letter-spacing:-0.333px">Direction:</span>
<span class="t " id="t21" style="left:260px;top:539px;letter-spacing:-0.150px">south (facing camera)</span>
<span class="t " id="t22" style="left:280px;top:575px;letter-spacing:-0.125px">Isometric</span>
<span class="t " id="t23" style="left:720px;top:575px;letter-spacing:-0.208px">Oblique projection (beta)</span>
<i style="left:19px;top:606px;width:82px;height:18px;background:#d3cbbe"></i>
<span class="t b" id="t24" style="left:18px;top:605px;letter-spacing:-0.444px">Init image</span>
<span class="t " id="t25" style="left:12px;top:633px;letter-spacing:-0.533px">Use init images:</span>
<span class="t " id="t26" style="left:260px;top:641px;letter-spacing:-1.200px">No</span>
<i style="left:19px;top:676px;width:42px;height:18px;background:#d3cbbe"></i>
<span class="t b" id="t27" style="left:18px;top:675px;letter-spacing:-0.500px">Color</span>
<span class="t " id="t28" style="left:13px;top:703px;letter-spacing:0.000px">Target palette:</span>
<span class="t " id="t29" style="left:260px;top:711px;letter-spacing:-1.200px">No</span>
<i style="left:19px;top:746px;width:62px;height:18px;background:#d3cbbe"></i>
<span class="t b" id="t30" style="left:18px;top:745px;letter-spacing:-0.500px">General</span>
<span class="t " id="t31" style="left:12px;top:773px;letter-spacing:-0.462px">Output method:</span>
<span class="t " id="t32" style="left:260px;top:781px;letter-spacing:-0.625px">New layer</span>
<span class="t " id="t33" style="left:12px;top:813px;letter-spacing:-0.455px">seed (0 = random seed):</span>
<span class="t " id="t34" style="left:260px;top:819px;letter-spacing:0.000px">0</span>
<span class="t " id="t35" style="left:12px;top:851px;letter-spacing:-0.227px">Load previous settings:</span>
<span class="t " id="t36" style="left:712px;top:857px;letter-spacing:-0.100px">Select File</span>
<span class="t " id="t37" style="left:171px;top:911px;letter-spacing:-0.400px">Advanced options</span>
<span class="t " id="t38" style="left:242px;top:945px;letter-spacing:-0.571px">Generate</span>
<span class="t " id="t39" style="left:536px;top:945px;letter-spacing:-0.750px">Reset</span>
<span class="t " id="t40" style="left:778px;top:945px;letter-spacing:-0.417px">Documentation</span>
<span class="t " id="t41" style="left:1092px;top:945px;letter-spacing:-0.400px">Cancel</span>
<span class="m" id="m0" style="left:536px;top:38px;letter-spacing:0.15px">Skeleton setup</span>
<span class="m" id="m1" style="left:654px;top:38px;letter-spacing:-0.2px">Generation</span>
</body></html>
